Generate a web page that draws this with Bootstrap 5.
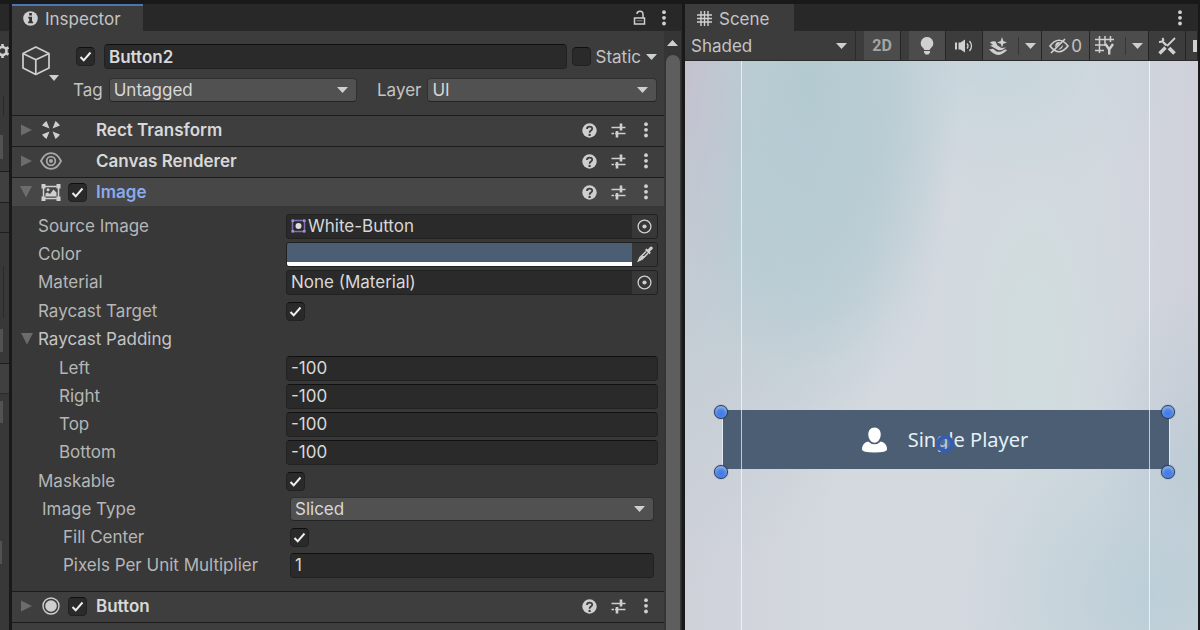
<!DOCTYPE html>
<html lang="en">
<head>
<meta charset="utf-8">
<meta name="viewport" content="width=device-width, initial-scale=1">
<title>Editor - Inspector</title>
<link rel="stylesheet" href="https://cdn.jsdelivr.net/npm/bootstrap@5.3.0/dist/css/bootstrap.min.css">
<style>
:root {
  --edge: #191919;
  --strip: #282828;
  --panel: #3c3c3c;
  --body-bg: #383838;
  --field: #2a2a2a;
  --ink: #c4c4c4;
  --dim: #b6b6b6;
  --bright: #d8d8d8;
}
body { background: var(--edge); color: var(--ink); font-family: Inter, "Liberation Sans", sans-serif; font-size: 17px; line-height: 24px; overflow: hidden; }
svg { display: block; flex: none; }
.workspace { display: grid; grid-template-columns: 9px minmax(0, 670fr) minmax(0, 513fr); gap: 0 3px; padding: 4px 2px 0 0; min-height: 100vh; }
.sliver { background: var(--body-bg); overflow: hidden; }
.pane-tabs { background: var(--strip); height: 27px; }
.pane-tab { background: var(--panel); color: var(--ink); border: 0; border-top: 2px solid var(--panel); height: 27px; font-size: 17px; line-height: 24px; }
.tab-inspector { border-top-color: #4d76b0; width: 131px; padding: 0 0 0 11px; gap: 7px; background: var(--panel); }
.tab-scene { width: 109px; padding: 0 0 0 12px; gap: 7px; }
.flat { background: none; border: 0; padding: 0; color: var(--ink); display: flex; align-items: center; justify-content: center; }

/* inspector */
.props { background: var(--body-bg); }
.scroller { width: 18px; background: #353535; border-right: 1px solid #2b2b2b; }
.thumb { background: #5e5e5e; width: 14px; border-radius: 7px 7px 0 0; margin-left: 2px; }
.object-head { background: var(--panel); height: 84px; padding: 13px 7px 0 10px; }
.object-rows { margin-left: 12px; }
.object-line { gap: 5px; }
.object-line .on-left { margin: 0 4px 0 3px; }
.tag-line { margin-top: 9px; }
.tag-line label { margin-right: 6px; }
.form-control, .form-select { color: var(--bright); font-size: 17px; line-height: 22px; height: 25px; min-height: 0; padding: 0 4px; border-radius: 4px; box-shadow: none; }
.form-control, .form-control:focus { background-color: var(--field); border: 1px solid #212121; border-top-color: #111; color: var(--bright); }
.form-select { height: 24px; line-height: 20px; background-color: #515151; border: 1px solid #303030; border-bottom-color: #242424; background-image: url("data:image/svg+xml,%3Csvg xmlns='http://www.w3.org/2000/svg' viewBox='0 0 12 6'%3E%3Cpath fill='%23cfcfcf' d='M0 0h11L5.5 6z'/%3E%3C/svg%3E"); background-size: 12px 6px; background-position: right 7px center; }
.form-check-input { width: 19px; height: 19px; margin: 0; border-radius: 3px; background-color: var(--field); border: 1px solid #212121; border-top-color: #0f0f0f; flex: none; }
.form-check-input:checked[type=checkbox] { background-color: var(--field); border-color: #0f0f0f #212121 #212121; background-image: url("data:image/svg+xml,%3Csvg xmlns='http://www.w3.org/2000/svg' viewBox='0 0 17 17'%3E%3Cpath fill='none' stroke='%23eee' stroke-width='2' d='M3.5 9l3.2 3.3L13.500 4.500'/%3E%3C/svg%3E"); background-size: 17px 17px; }
.object-name { font-weight: 600; }
.comp-head { background: #3e3e3e; border-top: 1px solid #1c1c1c; padding: 0 12px 2px 6px; height: 31px; }
.comp-head.is-open { background: #474747; padding-bottom: 0; height: 29px; }
.comp-head h2 { font-size: 17px; line-height: 24px; font-weight: 600; color: var(--bright); margin: 0; }
.comp-head.is-open h2 { color: #8aabee; }
.fold { width: 16px; }
.comp-icon { width: 22px; margin-left: 6px; display: flex; justify-content: center; }
.check-slot { width: 19px; margin: 0 9px 0 6px; display: flex; }
.tools { gap: 14px; }
.comp-body { padding: 6px 6px 12px 26px; display: grid; gap: 1px; }
.prop { display: grid; grid-template-columns: 248px minmax(0, 1fr); align-items: center; height: 28px; }
.prop label, .prop .flat { line-height: 24px; color: var(--dim); }
.deeper { padding-left: 21px; }
.inset { padding: 0 4px; }
.slot { background: var(--field); border: 1px solid #212121; border-radius: 3px; height: 25px; padding-left: 3px; overflow: hidden; }
.slot .form-control { border: 0; padding: 0 1px; height: 23px; background: none; }
.slot .pick { width: 25px; align-self: stretch; background: #373737; flex: none; }
.swatch-slot { padding-left: 0; }
.swatch { -webkit-appearance: none; appearance: none; width: 100%; height: 23px; padding: 0; border: 0; border-bottom: 4px solid #fff; background: #4b5e73; }
.swatch::-webkit-color-swatch-wrapper { padding: 0; }
.swatch::-webkit-color-swatch { border: 0; border-radius: 0; }
.prop .folder { margin-left: -17px; gap: 5px; color: var(--ink); }
.props-end { border-top: 1px solid #1c1c1c; background: #3e3e3e; height: 8px; }

/* scene */
.scene-bar { background: var(--panel); height: 30px; border-bottom: 1px solid #2b2b2b; overflow: hidden; }
.scene-bar .form-select { width: 171px; flex: none; height: 29px; border: 0; border-radius: 0; background-color: var(--panel); color: var(--ink); padding-left: 6px; border-right: 1px solid #2b2b2b; }
.tool { height: 29px; border-right: 1px solid #252525; background: var(--panel); flex: none; gap: 2px; }
.tool.on { background: #4c4c4c; }
.tool-sm { width: 37px; }
.tool-md { width: 48px; }
.tool-lg { width: 59px; }
.tool-lg .split { border-left: 1px solid #363636; height: 18px; padding: 6px 0 0 6px; margin-left: 8px; }
.mode { font: 700 16px/24px Roboto, sans-serif; color: #a5a5a5; }
.viewport {
  position: relative; overflow: hidden;
  background:
    radial-gradient(ellipse 14% 50% at 0 0, #c2c2cf 0, #c2c2cf80 50%, #c2c2cf00 100%),
    radial-gradient(ellipse 30% 50% at 24% 4%, #b4cad1 0, #b4cad1b0 50%, #b4cad100 100%),
    radial-gradient(ellipse 28% 40% at 24% 24%, #b6ccd4b0 0, #b6ccd480 50%, #b6ccd400 100%),
    radial-gradient(ellipse 36% 34% at 90% 94%, #bccfd8 0, #bccfd880 50%, #bccfd800 100%),
    radial-gradient(ellipse 20% 34% at 100% 72%, #becbd5 0, #becbd570 50%, #becbd500 100%),
    radial-gradient(ellipse 40% 24% at 60% 0, #c6d6dc 0, #c6d6dc70 50%, #c6d6dc00 100%),
    radial-gradient(ellipse 26% 60% at 68% 50%, #cfdcdd 0, #cfdcdd60 50%, #cfdcdd00 100%),
    radial-gradient(ellipse 40% 50% at 0 42%, #c3cdd4 0, #c3cdd480 50%, #c3cdd400 100%),
    linear-gradient(90deg, #cfd1d9, #d4d9df 30%, #d4d8df 80%, #cfd1da);
}
.guide { position: absolute; top: 0; bottom: 0; width: 1px; background: #ffffffa8; z-index: 1; }
.guide-a { left: 11%; }
.guide-b { left: 90%; margin-left: 2px; }
.ui-item { position: absolute; top: 349px; left: 38px; right: 29px; height: 59px; background: #4b5e73; border: 0; padding: 0 2px 0 0; color: #e4f0f6; font: 20px/28px "Noto Sans", "Open Sans", sans-serif; gap: 21px; box-shadow: -1px 0 #e3eaef, 1px 0 #e3eaef; }
.grip { position: absolute; width: 14px; height: 14px; border-radius: 50%; border: 1px solid #223a63; background: radial-gradient(circle at 50% 65%, #3d7af0 0, #5285e0 40%, #8fb0ea 75%); z-index: 2; box-shadow: 0 0 1px #223a63; }
.g-tl { left: -9px; top: -5px; }
.g-tr { right: -6px; top: -5px; }
.g-bl { left: -9px; bottom: -10px; }
.g-br { right: -6px; bottom: -10px; }
.pivot { position: absolute; left: 50%; top: 50%; width: 18px; height: 18px; margin: -5px 0 0 -10px; border-radius: 50%; border: 4px solid #355fae; background: #5b84c455; }
</style>
</head>
<body>
<svg width="0" height="0" class="position-absolute" aria-hidden="true">
  <symbol id="i-right" viewBox="0 0 12 12"><path fill="#6c6c6c" d="M0 0l12 6L0 12z"/></symbol>
  <symbol id="i-open" viewBox="0 0 12 12"><path fill="#6c6c6c" d="M0 0h12L6 11.500z"/></symbol>
  <symbol id="i-drop" viewBox="0 0 11 6"><path fill="#cfcfcf" d="M0 0h11L5.500 6z"/></symbol>
  <symbol id="i-dots" viewBox="0 0 4 16"><g fill="#d0d0d0"><circle cx="2" cy="2.200" r="1.900"/><circle cx="2" cy="7.800" r="1.900"/><circle cx="2" cy="13.500" r="1.900"/></g></symbol>
  <symbol id="i-help" viewBox="0 0 15 15"><circle cx="7.500" cy="7.500" r="7.200" fill="#cfcfcf"/><path d="M5 5.900C5 2.800 10.200 2.800 10.200 5.700c0 1.900-2.600 1.900-2.600 4" fill="none" stroke="#3e3e3e" stroke-width="1.800"/><circle cx="7.600" cy="11.900" r="1.200" fill="#3e3e3e"/></symbol>
  <symbol id="i-preset" viewBox="0 0 15 15"><path d="M.5 4.500h7.500M11 4.500h3.500M.5 10.500h2.500M4 10.500h10.500" fill="none" stroke="#cfcfcf" stroke-width="1.500"/><path d="M8 4.500h3" stroke="#cfcfcf" stroke-width="1.500"/><path d="M10 .5v7M6 8v6.500" stroke="#cfcfcf" stroke-width="2.600"/></symbol>
  <symbol id="i-pick" viewBox="0 0 15 15"><circle cx="7.500" cy="7.500" r="6.400" fill="none" stroke="#cfcfcf" stroke-width="1.300"/><circle cx="7.500" cy="7.500" r="2.100" fill="#cfcfcf"/></symbol>
</svg>

<main class="workspace">
  <svg class="sliver h-100" width="9" height="626" aria-hidden="true">
    <path fill="#282828" d="M0 0h9v27H0z"/>
    <circle cx="2.500" cy="47" r="4" fill="none" stroke="#cfcfcf" stroke-width="2.600"/>
    <path fill="none" stroke="#cfcfcf" stroke-width="2.600" d="M2.500 40v3M2.500 51v3M5.500 45l3-1.500M5.500 49l3 1.500"/>
    <g fill="#1e1e1e"><path d="M0 167h9v1H0zM0 198h9v1H0zM0 228h9v1H0zM0 359h9v1H0z"/><path fill="#2a2a2a" d="M3 92h1v20H3zM3 262h1v52H3zM0 389h9v1H0z"/></g>
    <path fill="#525252" d="M0 131h3v24H0zM0 325h3v23H0zM0 397h3v22H0zM0 537h2v23H0z"/>
    <path fill="#404040" d="M0 360h9v29H0zM0 168h9v30H0z"/>
  </svg>

  <section class="d-flex flex-column" aria-label="Inspector">
    <div class="pane-tabs d-flex align-items-center">
      <button class="pane-tab tab-inspector d-flex align-items-center" type="button">
        <svg width="15" height="15" viewBox="0 0 15 15"><circle cx="7.500" cy="7.500" r="7.300" fill="#cfcfcf"/><path fill="#333" d="M6.200 2h2.700v2.400H6.200zM5.300 5.800h3.700v4.800h1.100v1.600H5.100v-1.600h1.100V7.400h-.9z"/></svg>
        Inspector
      </button>
      <button class="flat ms-auto" type="button" aria-label="Lock">
        <svg width="13" height="16" viewBox="0 0 13 16"><path fill="none" stroke="#d0d0d0" stroke-width="1.500" d="M1.500 8h10v6H1.500zM10 8V4.500Q10 1.300 7 1.300 4.200 1.300 3.900 3.800"/><path fill="#888" d="M3.500 10.300h6v1h-6z"/></svg>
      </button>
      <button class="flat ms-3 me-3" type="button" aria-label="Inspector menu"><svg width="4" height="16"><use href="#i-dots"/></svg></button>
    </div>

    <div class="d-flex flex-grow-1">
      <div class="props flex-grow-1">
        <div class="object-head d-flex align-items-start">
          <svg width="39" height="38" viewBox="0 0 39 38"><g fill="none" stroke="#cfcfcf" stroke-width="1.700" stroke-linejoin="round"><path d="M13.800 3L27 9.500v14.500L13.800 30.500 1 24V9.500z"/><path d="M1 9.500l12.800 6.300L27 9.500M13.800 15.800v14.700"/></g><path fill="#cfcfcf" d="M27 31h10l-5 6z"/></svg>
          <div class="object-rows flex-grow-1">
            <div class="object-line d-flex align-items-center">
              <input class="form-check-input on-left" type="checkbox" checked id="active" aria-label="Active">
              <input class="form-control object-name" type="text" value="Button2" aria-label="Name">
              <input class="form-check-input" type="checkbox" id="static">
              <label for="static">Static</label>
              <button class="flat" type="button" aria-label="Static flags"><svg width="11" height="6"><use href="#i-drop"/></svg></button>
            </div>
            <div class="tag-line row g-0 align-items-center">
              <div class="col d-flex align-items-center"><label for="tag">Tag</label><select class="form-select" id="tag"><option>Untagged</option></select></div>
              <div class="col d-flex align-items-center ps-3"><label class="ms-1" for="layer">Layer</label><select class="form-select" id="layer"><option>UI</option></select></div>
            </div>
          </div>
        </div>

        <div class="comp-head d-flex align-items-center">
          <button class="flat fold" type="button" aria-label="Expand Rect Transform"><svg width="11" height="12"><use href="#i-right"/></svg></button>
          <span class="comp-icon"><svg width="18" height="18" viewBox="0 0 18 18"><path fill="#cfcfcf" d="M7.500 7.500L0 4.500Q2 1.500 4.500 0zM10.500 7.500L13.500 0Q16 1.500 18 4.500zM7.500 10.500L4.500 18Q2 16.500 0 13.500zM10.500 10.500L18 13.500Q16 16.500 13.500 18z"/></svg></span>
          <span class="check-slot"></span>
          <h2>Rect Transform</h2>
          <div class="tools d-flex ms-auto">
            <button class="flat" type="button" aria-label="Help"><svg width="15" height="15"><use href="#i-help"/></svg></button>
            <button class="flat" type="button" aria-label="Presets"><svg width="15" height="15"><use href="#i-preset"/></svg></button>
            <button class="flat px-1" type="button" aria-label="Menu"><svg width="4" height="16"><use href="#i-dots"/></svg></button>
          </div>
        </div>

        <div class="comp-head d-flex align-items-center">
          <button class="flat fold" type="button" aria-label="Expand Canvas Renderer"><svg width="11" height="12"><use href="#i-right"/></svg></button>
          <span class="comp-icon"><svg width="22" height="18" viewBox="0 0 22 18"><g fill="none" stroke="#a8a8a8" stroke-width="1.800"><path d="M1 9C6-1.500 16-1.500 21 9 16 19.500 6 19.500 1 9z"/><circle cx="11" cy="9" r="4.300"/></g><circle cx="11" cy="9" r="2" fill="#a8a8a8"/></svg></span>
          <span class="check-slot"></span>
          <h2>Canvas Renderer</h2>
          <div class="tools d-flex ms-auto">
            <button class="flat" type="button" aria-label="Help"><svg width="15" height="15"><use href="#i-help"/></svg></button>
            <button class="flat" type="button" aria-label="Presets"><svg width="15" height="15"><use href="#i-preset"/></svg></button>
            <button class="flat px-1" type="button" aria-label="Menu"><svg width="4" height="16"><use href="#i-dots"/></svg></button>
          </div>
        </div>

        <div class="comp-head is-open d-flex align-items-center">
          <button class="flat fold" type="button" aria-label="Collapse Image"><svg width="12" height="12"><use href="#i-open"/></svg></button>
          <span class="comp-icon"><svg width="20" height="17" viewBox="0 0 20 17"><path fill="none" stroke="#cfcfcf" stroke-width="1.500" d="M2.500 2.500h15v12h-15z"/><path fill="#cfcfcf" d="M.5 0H4.500v4.500h-4zM15.500 0h4v4.500h-4zM.5 12.500h4V17h-4zM15.500 12.500h4V17h-4zM4.500 12.500V9.500L6.500 8.500l2.500 1.500L12.500 5.500l3 3v4z"/><circle cx="7" cy="5.800" r="1.500" fill="#cfcfcf"/></svg></span>
          <span class="check-slot"><input class="form-check-input" type="checkbox" checked aria-label="Image enabled"></span>
          <h2>Image</h2>
          <div class="tools d-flex ms-auto">
            <button class="flat" type="button" aria-label="Help"><svg width="15" height="15"><use href="#i-help"/></svg></button>
            <button class="flat" type="button" aria-label="Presets"><svg width="15" height="15"><use href="#i-preset"/></svg></button>
            <button class="flat px-1" type="button" aria-label="Menu"><svg width="4" height="16"><use href="#i-dots"/></svg></button>
          </div>
        </div>

        <div class="comp-body">
          <div>
            <div class="prop"><label for="source">Source Image</label>
              <div class="slot d-flex align-items-center">
                <svg width="17" height="16" viewBox="0 0 17 16"><path fill="none" stroke="#8270b4" stroke-width="1.500" d="M2.500 2.500h12v11h-12z"/><path fill="#a794d4" d="M1.500 1.500H4V4H1.500zM13 1.500h2.500V4H13zM1.500 12H4v2.500H1.500zM13 12h2.500v2.500H13z"/><circle cx="8.500" cy="8" r="3" fill="#ddd"/></svg>
                <input class="form-control" id="source" type="text" value="White-Button">
                <button class="flat pick" type="button" aria-label="Pick image"><svg width="15" height="15"><use href="#i-pick"/></svg></button>
              </div></div>
            <div class="prop"><label for="tint">Color</label>
              <div class="slot swatch-slot d-flex align-items-center">
                <input class="swatch" id="tint" type="color" value="#4b5e73">
                <button class="flat pick" type="button" aria-label="Sample colour"><svg width="16" height="16" viewBox="0 0 16 16"><path fill="#d0d0d0" d="M9.500 2.500l1.300 1L13 1Q14.200 0 15.300 1q1 1.200 0 2.300L12.800 5.600l1 1.200-1.500 1.500L8 4z"/><path fill="none" stroke="#d0d0d0" stroke-width="1.500" d="M9 5.500L3 11.500 1.500 14.800 5 13.200l6-6"/><path fill="#d0d0d0" d="M1 15.500l1.500-4L5 13.500zM5 10h4l-4 3.500-1.500-1.500z"/></svg></button>
              </div></div>
            <div class="prop"><label for="material">Material</label>
              <div class="slot d-flex align-items-center">
                <input class="form-control" id="material" type="text" value="None (Material)">
                <button class="flat pick" type="button" aria-label="Pick material"><svg width="15" height="15"><use href="#i-pick"/></svg></button>
              </div></div>
          </div>
          <div>
            <div class="prop"><label for="ray">Raycast Target</label><input class="form-check-input" id="ray" type="checkbox" checked></div>
            <div class="prop"><button class="flat folder justify-content-start" type="button"><svg width="12" height="12"><use href="#i-open"/></svg>Raycast Padding</button></div>
          </div>
          <div>
            <div class="prop"><label class="deeper" for="pl">Left</label><input class="form-control" id="pl" type="text" value="-100"></div>
            <div class="prop"><label class="deeper" for="pr">Right</label><input class="form-control" id="pr" type="text" value="-100"></div>
            <div class="prop"><label class="deeper" for="pt">Top</label><input class="form-control" id="pt" type="text" value="-100"></div>
            <div class="prop"><label class="deeper" for="pb">Bottom</label><input class="form-control" id="pb" type="text" value="-100"></div>
          </div>
          <div>
            <div class="prop"><label for="mask">Maskable</label><input class="form-check-input" id="mask" type="checkbox" checked></div>
            <div class="inset">
              <div class="prop"><label for="type">Image Type</label><select class="form-select" id="type"><option>Sliced</option></select></div>
              <div class="prop"><label class="deeper" for="fill">Fill Center</label><input class="form-check-input" id="fill" type="checkbox" checked></div>
              <div class="prop"><label class="deeper" for="ppu">Pixels Per Unit Multiplier</label><input class="form-control" id="ppu" type="text" value="1"></div>
            </div>
          </div>
        </div>

        <div class="comp-head d-flex align-items-center">
          <button class="flat fold" type="button" aria-label="Expand Button"><svg width="11" height="12"><use href="#i-right"/></svg></button>
          <span class="comp-icon"><svg width="18" height="18" viewBox="0 0 18 18"><circle cx="9" cy="9" r="8" fill="none" stroke="#cfcfcf" stroke-width="1.400"/><circle cx="9" cy="9" r="5.800" fill="#cfcfcf"/></svg></span>
          <span class="check-slot"><input class="form-check-input" type="checkbox" checked aria-label="Button enabled"></span>
          <h2>Button</h2>
          <div class="tools d-flex ms-auto">
            <button class="flat" type="button" aria-label="Help"><svg width="15" height="15"><use href="#i-help"/></svg></button>
            <button class="flat" type="button" aria-label="Presets"><svg width="15" height="15"><use href="#i-preset"/></svg></button>
            <button class="flat px-1" type="button" aria-label="Menu"><svg width="4" height="16"><use href="#i-dots"/></svg></button>
          </div>
        </div>
        <div class="props-end"></div>
      </div>
      <div class="scroller d-flex flex-column flex-shrink-0">
        <button class="flat pt-2 pb-2" type="button" aria-label="Scroll up"><svg width="11" height="8" viewBox="0 0 11 8"><path fill="#cfcfcf" d="M0 7h11L5.500 1z"/></svg></button>
        <div class="thumb flex-grow-1"></div>
      </div>
    </div>
  </section>

  <section class="d-flex flex-column" aria-label="Scene">
    <div class="pane-tabs d-flex align-items-center">
      <button class="pane-tab tab-scene d-flex align-items-center" type="button">
        <svg width="15" height="15" viewBox="0 0 15 15"><path fill="none" stroke="#cfcfcf" stroke-width="1.400" d="M4 0v15M7.500 0v15M11 0v15M0 4h15M0 7.500h15M0 11h15"/></svg>
        Scene
      </button>
      <button class="flat ms-auto me-3" type="button" aria-label="Scene menu"><svg width="4" height="16"><use href="#i-dots"/></svg></button>
    </div>
    <div class="scene-bar d-flex">
      <select class="form-select" aria-label="Draw mode"><option>Shaded</option></select>
      <button class="flat tool on tool-sm ms-2 mode" type="button">2D</button>
      <button class="flat tool on tool-sm ms-2" type="button" aria-label="Lighting"><svg width="14" height="18" viewBox="0 0 14 18"><path fill="#d0d0d0" d="M7 0a6.300 6.300 0 0 0-3.500 11.500L4.500 13h5l1-1.500A6.300 6.300 0 0 0 7 0zM4 14h6v1.500L8.500 17.500h-3L4 15.500z"/></svg></button>
      <button class="flat tool tool-sm" type="button" aria-label="Audio"><svg width="18" height="14" viewBox="0 0 18 14"><path fill="#d0d0d0" d="M0 3.500h2v7H0zM3.500 3.500h2L10 .5v13L5.500 10.500h-2z"/><path fill="none" stroke="#d0d0d0" stroke-width="1.300" d="M12 4.500q2 2.500 0 5M14.500 2q4 5 0 10"/></svg></button>
      <button class="flat tool on tool-lg" type="button" aria-label="Effects"><svg width="19" height="18" viewBox="0 0 19 18"><path fill="#d0d0d0" d="M13 0l1.300 4L18 5.500l-3.700 1.300L13 10.500l-1.300-3.700L8 5.500 11.700 4zM1 5.500Q4 3.500 6.500 4.500L8.500 8.500l4 2.500 4.500-.5Q13 14 9 13L1 8.500l3-.5zM0 12.500l4-.8 4 3h3.500l5-2.500 1.500 1Q13 18 9 18 5 17.500 0 12.500z"/></svg><span class="split"><svg width="11" height="6"><use href="#i-drop"/></svg></span></button>
      <button class="flat tool on tool-md" type="button" aria-label="Hidden objects"><svg width="20" height="16" viewBox="0 0 20 16"><path fill="none" stroke="#d0d0d0" stroke-width="1.700" d="M1 8Q10-3.500 19 8 10 19.500 1 8zM2 15L16 1"/><path fill="#d0d0d0" d="M6 9.500L11.500 4.500Q8 3 6.500 6zM9 12l5-5q0 4-5 5z"/></svg>0</button>
      <button class="flat tool on tool-lg" type="button" aria-label="Grid"><svg width="20" height="19" viewBox="0 0 20 19"><path fill="none" stroke="#d0d0d0" stroke-width="1.500" d="M4.500 0v17M10 0v10M15.500 0v6M0 3.500h19M0 9h10M0 14.500h9"/><path fill="none" stroke="#d0d0d0" stroke-width="2.400" d="M10.500 8l3.700 5.500L18 8M14.200 13v5.500"/></svg><span class="split"><svg width="11" height="6"><use href="#i-drop"/></svg></span></button>
      <button class="flat tool tool-sm" type="button" aria-label="Tools"><svg width="18" height="18" viewBox="0 0 18 18"><path fill="none" stroke="#d0d0d0" stroke-width="2.400" d="M5 5l3.500 3.500"/><path fill="none" stroke="#d0d0d0" stroke-width="3.800" d="M11 11l5.500 5.500"/><path fill="none" stroke="#d0d0d0" stroke-width="2.200" d="M4.500 1q2.500 4-3.500 4"/><path fill="none" stroke="#d0d0d0" stroke-width="1.800" d="M17 1L9 9"/><path fill="none" stroke="#d0d0d0" stroke-width="3.400" d="M7.500 10.500l-6 6"/></svg></button>
      <button class="flat tool flex-fill justify-content-end" type="button" aria-label="Camera"><svg width="4" height="12"><path fill="#d0d0d0" d="M0 0h4v12H0z"/></svg></button>
    </div>
    <div class="viewport flex-grow-1">
      <span class="guide guide-a"></span>
      <span class="guide guide-b"></span>
      <button class="ui-item d-flex align-items-center justify-content-center" type="button">
        <svg width="25" height="26" viewBox="0 0 25 26"><path fill="#fff" d="M12.500 0.500C8.500 .5 6.300 3.500 6.300 7.500s2.500 8.200 6.200 8.200S18.700 11.500 18.700 7.500 16.500 .5 12.500 .5z"/><path fill="#fff" d="M6.200 14.500Q9 17.300 12.500 17.300T18.800 14.500Q25 16 25 22.500 25 25.500 12.500 25.500T0 22.500Q0 16 6.200 14.500z"/></svg>
        Single Player
        <span class="grip g-tl"></span><span class="grip g-tr"></span><span class="grip g-bl"></span><span class="grip g-br"></span>
        <span class="pivot"></span>
      </button>
    </div>
  </section>
</main>
<script src="https://cdn.jsdelivr.net/npm/bootstrap@5.3.0/dist/js/bootstrap.bundle.min.js"></script>
</body>
</html>
